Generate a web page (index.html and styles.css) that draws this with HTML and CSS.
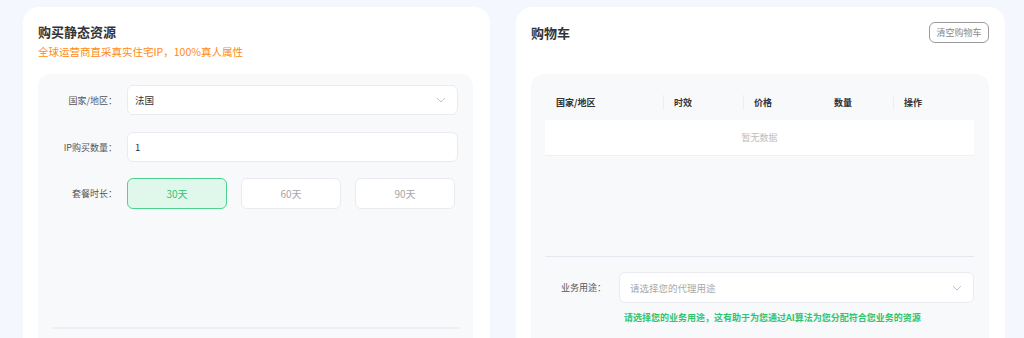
FILE: index.html
```html
<!DOCTYPE html>
<html lang="zh-CN">
<head>
    <meta charset="UTF-8">
    <meta name="viewport" content="width=device-width, initial-scale=1.0">
    <title>购买静态资源</title>
    <link rel="stylesheet" href="styles.css">
</head>
<body>
    <div class="page">
        <!-- 购买静态资源 -->
        <div class="card card-buy">
            <h2 class="card-title">购买静态资源</h2>
            <p class="card-sub">全球运营商直采真实住宅IP，100%真人属性</p>
            <div class="panel">
                <div class="form-row">
                    <span class="form-label">国家/地区：</span>
                    <div class="select">
                        <span class="select-value">法国</span>
                        <svg class="chevron" width="10" height="6" viewBox="0 0 10 6"><path d="M1 1l4 4 4-4" fill="none" stroke="#c0c4cc" stroke-width="1"/></svg>
                    </div>
                </div>
                <div class="form-row">
                    <span class="form-label">IP购买数量：</span>
                    <div class="input">1</div>
                </div>
                <div class="form-row form-row-plan">
                    <span class="form-label">套餐时长：</span>
                    <div class="plans">
                        <button class="plan active">30天</button>
                        <button class="plan">60天</button>
                        <button class="plan">90天</button>
                    </div>
                </div>
                <div class="panel-divider"></div>
            </div>
        </div>

        <!-- 购物车 -->
        <div class="card card-cart">
            <div class="cart-head">
                <h2 class="card-title">购物车</h2>
                <button class="clear-btn">清空购物车</button>
            </div>
            <div class="panel panel-cart">
                <div class="table">
                    <div class="table-head">
                        <div class="th">国家/地区</div>
                        <div class="th sep">时效</div>
                        <div class="th sep">价格</div>
                        <div class="th">数量</div>
                        <div class="th sep">操作</div>
                    </div>
                    <div class="table-empty">暂无数据</div>
                </div>
                <div class="cart-divider"></div>
                <div class="form-row usage-row">
                    <span class="form-label usage-label">业务用途：</span>
                    <div class="select">
                        <span class="select-placeholder">请选择您的代理用途</span>
                        <svg class="chevron" width="10" height="6" viewBox="0 0 10 6"><path d="M1 1l4 4 4-4" fill="none" stroke="#c0c4cc" stroke-width="1"/></svg>
                    </div>
                </div>
                <p class="usage-tip">请选择您的业务用途，这有助于为您通过AI算法为您分配符合您业务的资源</p>
            </div>
        </div>
    </div>
</body>
</html>
```

FILE: styles.css
```css
body {
    margin: 0;
    background: #f4f7fd;
    font-family: "Noto Sans CJK SC", "Noto Sans", sans-serif;
    color: #333;
    overflow: hidden;
}

.page {
    display: flex;
    gap: 26px;
    padding: 7px 0 0 23px;
}

.card {
    background: #fff;
    border-radius: 16px;
    padding: 15px 16px 0 15px;
    height: 420px;
    box-sizing: border-box;
}

.card-buy {
    width: 467px;
    padding-right: 17px;
}

.card-cart {
    width: 489px;
}

.card-title {
    margin: 0;
    font-size: 13px;
    line-height: 20px;
    font-weight: 700;
    color: #333;
}

.card-sub {
    margin: 2px 0 0;
    font-size: 10.5px;
    line-height: 16px;
    color: #ff8a14;
}

.panel {
    margin-top: 14px;
    background: #f8f9fb;
    border-radius: 12px;
    padding: 11px 15px 0;
    height: 320px;
}

.form-row {
    display: flex;
    align-items: center;
    height: 30px;
}

.form-row + .form-row {
    margin-top: 17px;
}

.form-row-plan {
    height: 31px;
    margin-top: 16px !important;
}

.form-label {
    width: 64px;
    margin-right: 10px;
    flex-shrink: 0;
    text-align: right;
    font-size: 9px;
    color: #555;
    white-space: nowrap;
}

.select,
.input {
    flex: 1;
    height: 100%;
    box-sizing: border-box;
    background: #fff;
    border: 1px solid #e9ebf1;
    border-radius: 6px;
    display: flex;
    align-items: center;
    justify-content: space-between;
    padding: 0 11px 0 7px;
    font-size: 9.5px;
    color: #333;
}

.chevron {
    flex-shrink: 0;
}

.plans {
    flex: 1;
    display: flex;
    gap: 14px;
    height: 100%;
}

.plan {
    width: 100px;
    height: 100%;
    background: #fff;
    border: 1px solid #e9ebf1;
    border-radius: 6px;
    font-family: inherit;
    font-size: 10px;
    color: #a6a6a6;
    padding: 0;
}

.plan.active {
    border: 1.5px solid #4dd48c;
    background: #e0f7ec;
    color: #34c273;
}

.panel-divider {
    margin-top: 118px;
    height: 2px;
    background: #eceef5;
    margin-right: -1px;
}

/* 购物车 */
.cart-head {
    display: flex;
    justify-content: space-between;
    align-items: center;
    height: 21px;
}

.clear-btn {
    width: 60px;
    height: 21px;
    background: #fff;
    border: 1px solid #9a9a9a;
    border-radius: 6px;
    font-family: inherit;
    font-size: 9px;
    color: #888;
    padding: 0;
}

.panel-cart {
    margin-top: 31px;
    padding: 10px 15px 0 14px;
}

.table-head {
    display: grid;
    grid-template-columns: 118px 80px 80px 70px 80px;
    height: 36px;
    align-items: center;
}

.th {
    font-size: 9px;
    font-weight: 700;
    color: #333;
    padding-left: 11px;
    height: 15px;
    line-height: 15px;
}

.th.sep {
    border-left: 1px solid #eceef2;
    padding-left: 10px;
}

.table-empty {
    height: 36px;
    background: #fff;
    border-bottom: 1px solid #eef0f4;
    box-sizing: border-box;
    display: flex;
    align-items: center;
    justify-content: center;
    font-size: 9px;
    color: #bdbdbd;
}

.cart-divider {
    margin-top: 100px;
    height: 1px;
    background: #e6e8f0;
}

.usage-row {
    margin-top: 15px;
    height: 31px;
}

.usage-label {
    width: 61px;
    margin-right: 13px;
}

.usage-row .select {
    padding-left: 10px;
}

.select-placeholder {
    color: #a8a8a8;
}

.usage-tip {
    margin: 9px 0 0 79px;
    font-size: 9px;
    line-height: 12px;
    font-weight: 700;
    color: #2fc46e;
    white-space: nowrap;
}
```
